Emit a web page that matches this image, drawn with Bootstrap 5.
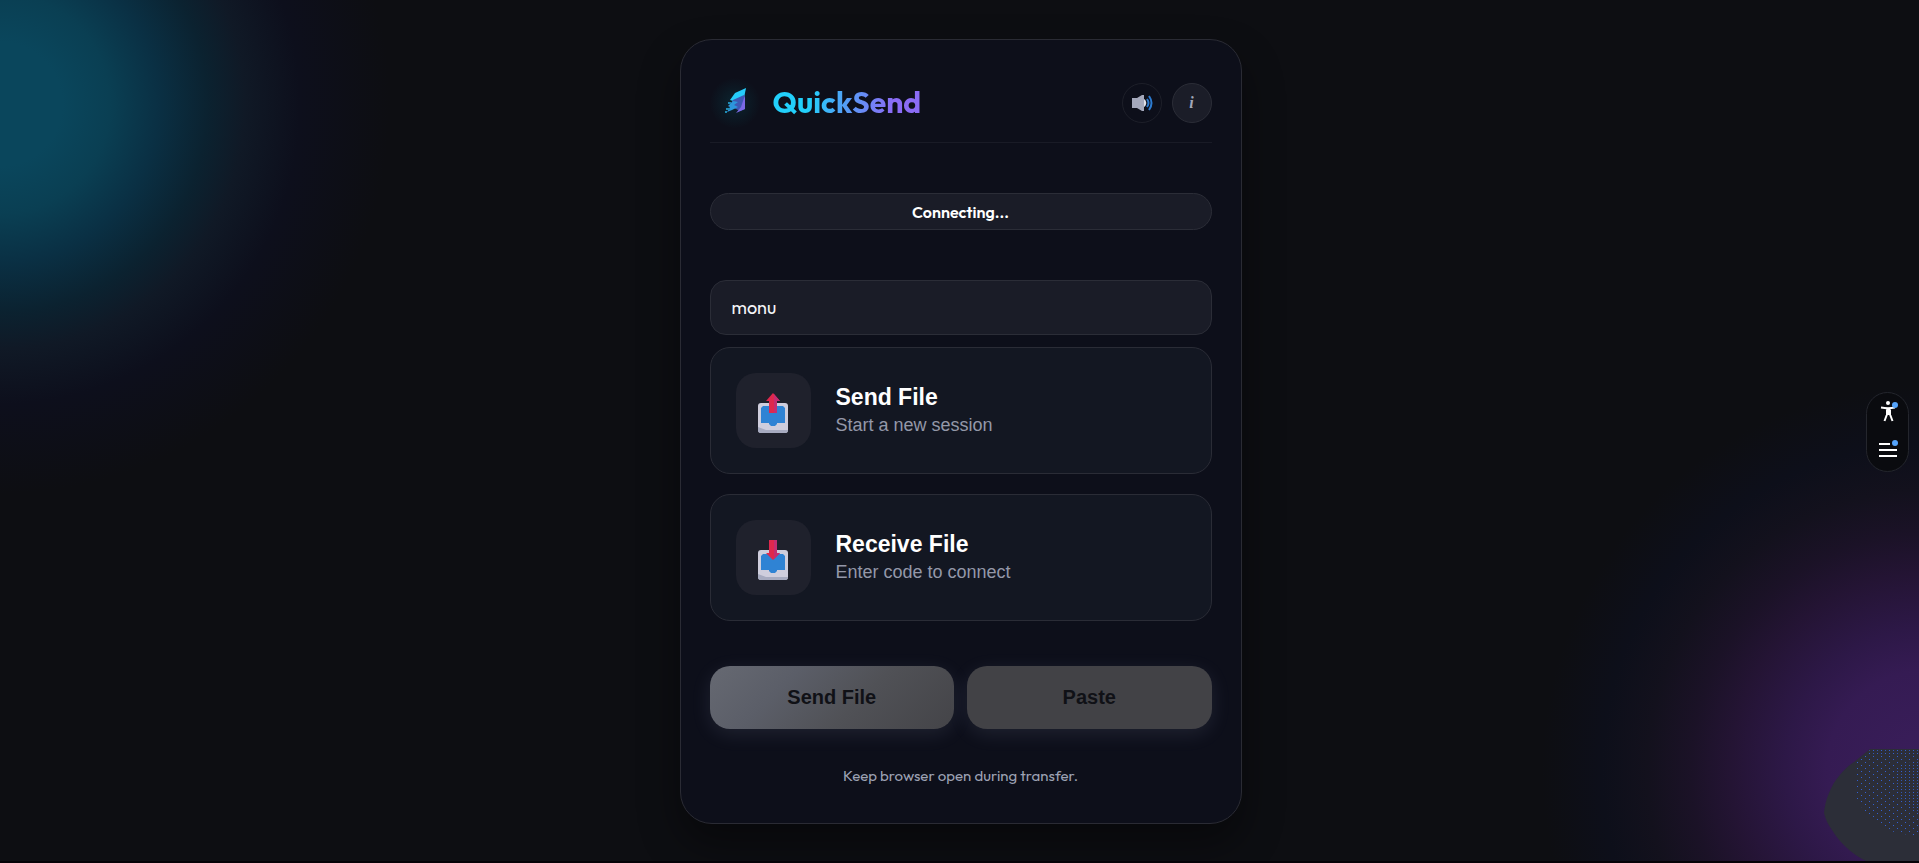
<!DOCTYPE html>
<html lang="en">
<head>
<meta charset="utf-8">
<meta name="viewport" content="width=device-width, initial-scale=1">
<title>QuickSend</title>
<link href="https://cdn.jsdelivr.net/npm/bootstrap@5.3.0/dist/css/bootstrap.min.css" rel="stylesheet">
<style>
  body {
    font-family: Outfit, Lato, sans-serif;
    color: #fff;
    background:
      radial-gradient(circle 410px at 0 104px, #0a465c 0, #0a465c 62px, #0a3f53 110px, #0a3044 158px, #0b2230 208px, #101926 245px, #0d0f1c 300px, #0d0e12 390px, transparent 410px),
      radial-gradient(circle 400px at calc(100% + 8px) calc(100% - 93px), #3a1e5b 0, #351b53 100px, #2d1847 142px, #241434 196px, #1b1227 236px, #13111d 280px, #0d0f1a 325px, #0d0e12 385px, transparent 400px),
      #0d0e12;
    border-bottom: 2px solid #050207;
    overflow-x: hidden;
  }
  .panel {
    width: 100%;
    max-width: 562px;
    margin: 39px 0 36px 2px;
    padding: 29px 29px 35px;
    border: 1px solid #2a2b34;
    border-radius: 32px;
    background: #0d0f1a;
    box-shadow: 0 20px 40px rgba(0, 0, 0, .4);
  }
  .panel-head { padding: 9px 0 14px; border-bottom: 1px solid #191b26; margin-bottom: 50px; gap: 13px; }
  .logo { width: 50px; height: 50px; border-radius: 50%; background: radial-gradient(circle, #0b2530 0, #0c1722 45%, transparent 72%); }
  .brand { font-size: 30px; line-height: 38px; padding-bottom: 2px; font-weight: 700; color: transparent; background: linear-gradient(100deg, #22d0fb 25%, #559cf6 50%, #8b6cf6 80%); background-clip: text; -webkit-background-clip: text; }
  .head-tools { gap: 10px; }
  .round-btn { width: 40px; height: 40px; border-radius: 50%; border: 1px solid #1d1f29; background: transparent; padding: 0; color: #a2a6b8; }
  .round-btn.filled { background: #1b1d28; border-color: #2b2d37; font: italic bold 16px "Liberation Serif", serif; }
  .status { height: 37px; border: 1px solid #2b2d37; border-radius: 20px; background: #1a1c27; font-size: 16px; font-weight: 600; margin-bottom: 50px; }
  .name-box, .name-box:focus { height: 55px; padding: 0 21px; border: 1px solid #2b2d37; border-radius: 16px; background: #1a1c27; color: #f4f5f8; font-size: 18px; margin-bottom: 12px; }
  .actions { gap: 20px; margin-bottom: 45px; }
  .action { height: 127px; padding: 0 25px; border: 1px solid #2a2c36; border-radius: 20px; background: #131722; color: #fff; gap: 25px; font-family: "Liberation Sans", Arial, sans-serif; }
  .tile { width: 75px; height: 75px; border-radius: 20px; background: #1f212c; }
  .action-title { font-size: 23px; line-height: 28px; font-weight: 700; }
  .action-sub { font-size: 18px; line-height: 28px; color: #9498a9; }
  .buttons { gap: 13px; margin-bottom: 35px; }
  .big-btn, .big-btn:disabled { height: 63px; border: 0; border-radius: 20px; background: #424246; color: #101116; font: bold 20px "Liberation Sans", Arial, sans-serif; box-shadow: 0 5px 20px rgba(200, 205, 255, .1); }
  .big-btn.primary { background: linear-gradient(135deg, #666972 0, #5b5e68 30%, #505156 60%, #444448 100%); }
  .foot { font-size: 15px; line-height: 24px; color: #9da2b4; }
  .side-menu { right: 10px; width: 43px; height: 80px; border: 1px solid #24262d; border-radius: 22px; background: #0a0b0f; gap: 13px; padding-bottom: 4px; }
  .side-menu button { background: none; border: 0; padding: 0; line-height: 0; }
  .corner { right: 0; bottom: 0; line-height: 0; }
</style>
</head>
<body class="min-vh-100 position-relative d-flex justify-content-center align-items-start">
<main class="panel">
  <header class="panel-head d-flex align-items-center">
    <div class="logo d-flex align-items-center justify-content-center">
      <svg class="mb-1" width="24" height="28" viewBox="0 0 24 28" aria-hidden="true">
        <path d="M23 1 12 6 7 13l6 2 8-4z" fill="#26cdfb"/>
        <path d="M10 13l11-5 1 14-5 2-6-3-4-3z" fill="#3e58b4"/>
        <path d="M22 8v14l-9 4 5-6z" fill="#7b69e6"/>
        <path d="M10 14l5 1-4 3 4 2-6 3-5 2 3-5-2-1z" fill="#2c96dc"/>
        <path d="M3 21h4v2H3zM2 24h2v2H2zM5 15h3v2H5z" fill="#218bb5"/>
      </svg>
    </div>
    <h1 class="brand mb-0 me-auto">QuickSend</h1>
    <div class="head-tools d-flex">
      <button class="round-btn d-flex align-items-center justify-content-center" type="button" aria-label="Sound">
        <svg width="22" height="20" viewBox="0 0 22 20" aria-hidden="true">
          <path d="M1 5h5l5-3h2v16h-2l-5-3H1z" fill="#a4a8bb"/>
          <path d="M13 6c3 2 3 6 0 8z" fill="#dfe1ea"/>
          <path d="M16 6q3 4 0 8M18 3q5 7 0 14" fill="none" stroke="#2c7bd0" stroke-width="2"/>
        </svg>
      </button>
      <button class="round-btn filled" type="button">i</button>
    </div>
  </header>
  <div class="status d-flex align-items-center justify-content-center" role="status">Connecting...</div>
  <input class="name-box form-control shadow-none" type="text" aria-label="Name" value="monu">
  <div class="actions d-grid">
    <button class="action d-flex align-items-center text-start" type="button">
      <span class="tile d-flex align-items-center justify-content-center">
        <svg class="mt-1" width="32" height="40" viewBox="0 0 32 40" aria-hidden="true">
          <rect x="1" y="10" width="30" height="30" rx="3" fill="#cfcedd"/>
          <path d="M1 34l8 3h22q0 3-3 3H4q-3 0-3-3z" fill="#a7abc0"/>
          <path d="M6 13h20l2 2v15h-8v1l-2 2h-4l-2-2v-1H4V15z" fill="#2f83d4"/>
          <path d="M16 0l7 8h-3v12h-8V8H9z" fill="#df284d"/><path d="M17 1l6 7h-3v12h-3z" fill="#c42d71"/>
        </svg>
      </span>
      <span><span class="action-title d-block">Send File</span><span class="action-sub d-block">Start a new session</span></span>
    </button>
    <button class="action d-flex align-items-center text-start" type="button">
      <span class="tile d-flex align-items-center justify-content-center">
        <svg class="mt-1" width="32" height="40" viewBox="0 0 32 40" aria-hidden="true">
          <rect x="1" y="10" width="30" height="30" rx="3" fill="#cfcedd"/>
          <path d="M1 34l8 3h22q0 3-3 3H4q-3 0-3-3z" fill="#a7abc0"/>
          <path d="M6 14h20l2 2v14h-8v1l-2 2h-4l-2-2v-1H4V16z" fill="#2f83d4"/>
          <path d="M12 0h8v13h3l-7 7-7-7h3z" fill="#df284d"/><path d="M17 0h3v13h3l-6 6z" fill="#c42d71"/>
        </svg>
      </span>
      <span><span class="action-title d-block">Receive File</span><span class="action-sub d-block">Enter code to connect</span></span>
    </button>
  </div>
  <div class="buttons d-flex">
    <button class="big-btn primary flex-fill w-50" type="button" disabled>Send File</button>
    <button class="big-btn flex-fill w-50" type="button" disabled>Paste</button>
  </div>
  <p class="foot text-center mb-0">Keep browser open during transfer.</p>
</main>

<div class="corner position-fixed">
  <svg width="95" height="114" viewBox="0 0 95 114" aria-hidden="true">
    <defs>
      <pattern id="dots" width="8" height="6" patternUnits="userSpaceOnUse">
        <path d="M1 1h1v1H1zM5 4h1v1H5z" fill="#3460d0"/>
      </pattern>
      <pattern id="dense" width="4" height="3" patternUnits="userSpaceOnUse">
        <path d="M1 1h1v1H1z" fill="#3460d0"/>
      </pattern>
    </defs>
    <path d="M46 0H95V112H42Q30 106 23 99 14 91 8 81 2 73 0 64 1 53 5 44 9 34 15 27 22 18 30 13z" fill="#2c2e38"/>
    <path d="M46 0H95V88L70 83 45 66 30 50V13z" fill="url(#dots)"/>
    <path d="M46 0H95V5H44zM70 20l25-10v55l-20-15z" fill="url(#dense)" opacity=".8"/>
  </svg>
</div>
<nav class="side-menu position-fixed top-50 translate-middle-y d-flex flex-column align-items-center justify-content-center" aria-label="Tools">
  <button type="button" aria-label="Accessibility">
    <svg width="24" height="24" viewBox="0 0 24 24" aria-hidden="true">
      <circle cx="12" cy="4" r="2" fill="#fff"/>
      <path d="M5 8.500l7 1 7-1M11 10h3v5h-3zM11.500 14l-3 8M13.500 14l3 8" fill="#fff" stroke="#fff" stroke-width="2"/>
      <circle cx="19" cy="6" r="3" fill="#55a4fb"/>
    </svg>
  </button>
  <button type="button" aria-label="Menu">
    <svg width="24" height="24" viewBox="0 0 24 24" aria-hidden="true">
      <path d="M3 8h11M3 14h18M3 20h18" stroke="#fff" stroke-width="2"/>
      <circle cx="19" cy="7" r="3" fill="#55a4fb"/>
    </svg>
  </button>
</nav>
</body>
</html>
